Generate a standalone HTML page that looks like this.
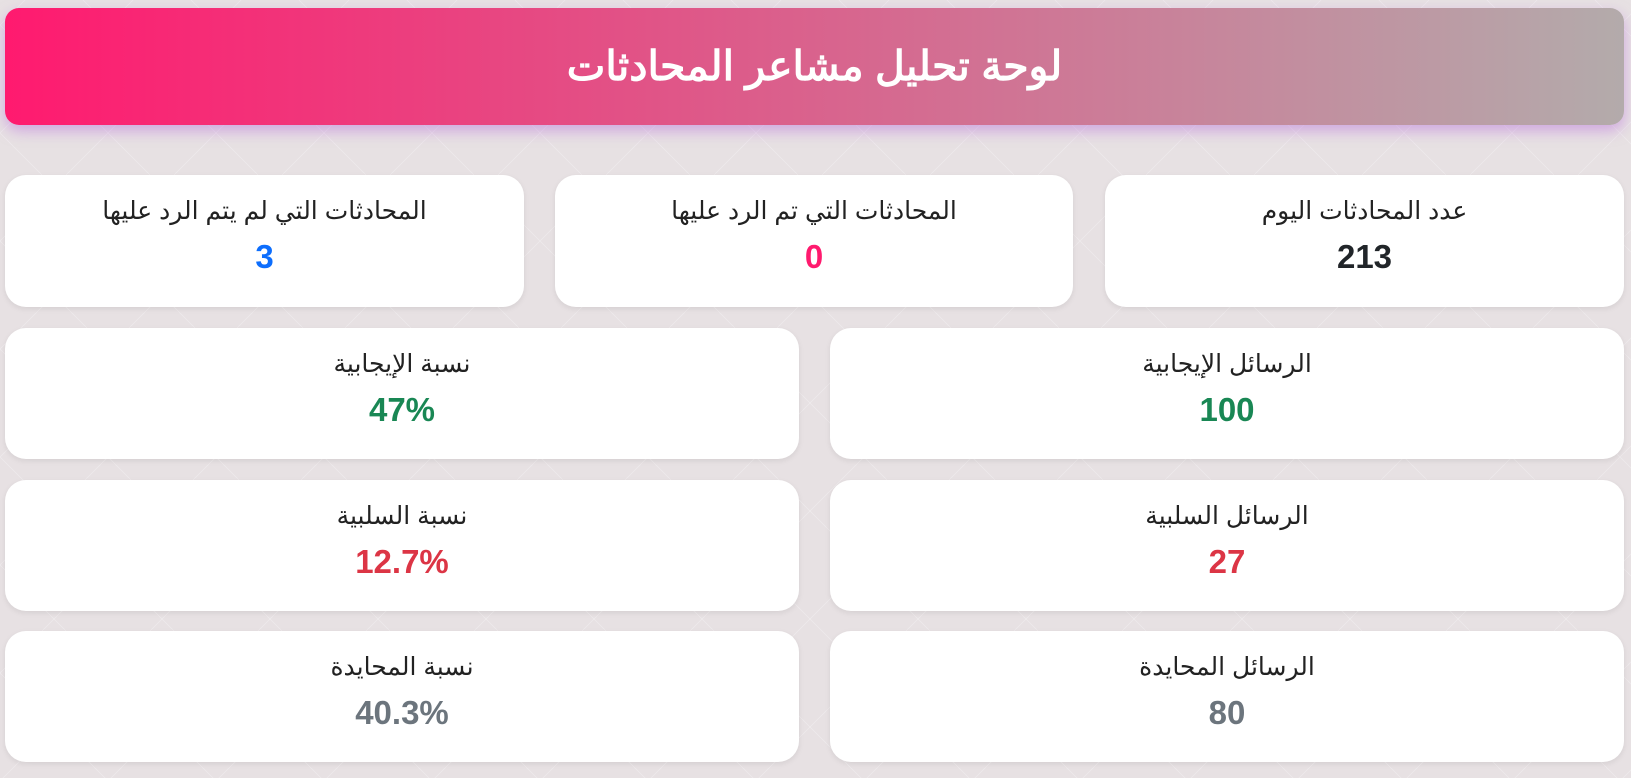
<!DOCTYPE html>
<html lang="ar" dir="rtl"><head><meta charset="utf-8"><style>
*{box-sizing:border-box;margin:0;padding:0}
body{width:1631px;height:778px;overflow:hidden;background:#e7e1e3;font-family:"Liberation Sans","Noto Sans CJK SC",sans-serif;position:relative}
.bg{position:absolute;inset:0;background-image:linear-gradient(45deg,transparent 49.6%,rgba(255,255,255,.35) 50%,transparent 50.4%),linear-gradient(-45deg,transparent 49.6%,rgba(255,255,255,.35) 50%,transparent 50.4%);background-size:108px 108px;background-position:0 25px}
.hdr{position:absolute;left:5px;top:8px;width:1619px;height:117px;border-radius:14px;background:linear-gradient(90deg,#ff1a6f,#b3abab);box-shadow:0 6px 14px rgba(190,120,220,.55);color:#fff;font-weight:bold;font-size:41px;text-align:center;line-height:117px}
.c{position:absolute;background:#fff;border-radius:21px;box-shadow:0 2px 6px rgba(0,0,0,.08);text-align:center}
.c .l{position:absolute;left:0;right:0;top:21px;font-size:25px;color:#222}
.c .v{position:absolute;left:0;right:0;top:63px;font-size:33px;font-weight:bold}
</style></head><body><div class="bg"></div>
<div class="hdr">لوحة تحليل مشاعر المحادثات</div>
<div class="c" style="left:1105px;top:175px;width:519px;height:132px"><div class="l">عدد المحادثات اليوم</div><div class="v" style="color:#212529">213</div></div>
<div class="c" style="left:555px;top:175px;width:518px;height:132px"><div class="l">المحادثات التي تم الرد عليها</div><div class="v" style="color:#ff1a6e">0</div></div>
<div class="c" style="left:5px;top:175px;width:519px;height:132px"><div class="l">المحادثات التي لم يتم الرد عليها</div><div class="v" style="color:#0d6efd">3</div></div>
<div class="c" style="left:830px;top:328px;width:794px;height:131px"><div class="l">الرسائل الإيجابية</div><div class="v" style="color:#198754">100</div></div>
<div class="c" style="left:5px;top:328px;width:794px;height:131px"><div class="l">نسبة الإيجابية</div><div class="v" style="color:#198754">47%</div></div>
<div class="c" style="left:830px;top:480px;width:794px;height:131px"><div class="l">الرسائل السلبية</div><div class="v" style="color:#dc3545">27</div></div>
<div class="c" style="left:5px;top:480px;width:794px;height:131px"><div class="l">نسبة السلبية</div><div class="v" style="color:#dc3545">12.7%</div></div>
<div class="c" style="left:830px;top:631px;width:794px;height:131px"><div class="l">الرسائل المحايدة</div><div class="v" style="color:#6c757d">80</div></div>
<div class="c" style="left:5px;top:631px;width:794px;height:131px"><div class="l">نسبة المحايدة</div><div class="v" style="color:#6c757d">40.3%</div></div>
</body></html>
